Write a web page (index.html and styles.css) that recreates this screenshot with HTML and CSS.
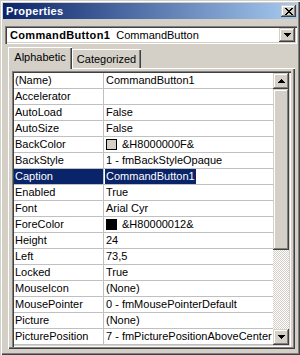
FILE: index.html
```html
<!doctype html>
<html lang="en">
<head>
  <meta charset="utf-8">
  <title>Properties</title>
  <link rel="stylesheet" href="styles.css">
</head>
<body>
<div class="win">
  <div class="titlebar">
    <span>Properties</span>
    <div class="btn close-btn">
      <svg width="8" height="7" viewBox="0 0 8 7"><path d="M0 0h2v1h-2zM6 0h2v1h-2zM1 1h2v1h-2zM5 1h2v1h-2zM2 2h4v1h-4zM3 3h2v1h-2zM2 4h4v1h-4zM1 5h2v1h-2zM5 5h2v1h-2zM0 6h2v1h-2zM6 6h2v1h-2z" fill="#000"/></svg>
    </div>
  </div>
  <div class="combo">
    <div class="combo-text"><b>CommandButton1</b> CommandButton</div>
    <div class="btn drop-btn">
      <svg width="7" height="4" viewBox="0 0 7 4"><path d="M0 0h7v1h-7zM1 1h5v1h-5zM2 2h3v1h-3zM3 3h1v1h-1z" fill="#000"/></svg>
    </div>
  </div>
  <div class="tabs">
    <div class="tab active">Alphabetic</div>
    <div class="tab cat">Categorized</div>
  </div>
  <div class="page">
    <div class="grid">
      <div class="props">
        <div class="name">(Name)</div><div class="val">CommandButton1</div>
        <div class="name">Accelerator</div><div class="val"></div>
        <div class="name">AutoLoad</div><div class="val">False</div>
        <div class="name">AutoSize</div><div class="val">False</div>
        <div class="name">BackColor</div><div class="val"><span class="swatch face"></span>&amp;H8000000F&amp;</div>
        <div class="name">BackStyle</div><div class="val">1 - fmBackStyleOpaque</div>
        <div class="name sel">Caption</div><div class="val edit"><span class="hl">CommandButton1</span></div>
        <div class="name">Enabled</div><div class="val">True</div>
        <div class="name">Font</div><div class="val">Arial Cyr</div>
        <div class="name">ForeColor</div><div class="val"><span class="swatch black"></span>&amp;H80000012&amp;</div>
        <div class="name">Height</div><div class="val">24</div>
        <div class="name">Left</div><div class="val">73,5</div>
        <div class="name">Locked</div><div class="val">True</div>
        <div class="name">MouseIcon</div><div class="val">(None)</div>
        <div class="name">MousePointer</div><div class="val">0 - fmMousePointerDefault</div>
        <div class="name">Picture</div><div class="val">(None)</div>
        <div class="name">PicturePosition</div><div class="val">7 - fmPicturePositionAboveCenter</div>
      </div>
      <div class="scroll">
        <div class="btn sb-btn">
          <svg width="7" height="4" viewBox="0 0 7 4"><path d="M3 0h1v1h-1zM2 1h3v1h-3zM1 2h5v1h-5zM0 3h7v1h-7z" fill="#000"/></svg>
        </div>
        <div class="btn thumb"></div>
        <div class="track"></div>
        <div class="btn sb-btn">
          <svg width="7" height="4" viewBox="0 0 7 4"><path d="M0 0h7v1h-7zM1 1h5v1h-5zM2 2h3v1h-3zM3 3h1v1h-1z" fill="#000"/></svg>
        </div>
      </div>
    </div>
  </div>
</div>
</body>
</html>
```

FILE: styles.css
```css
:root{--face:#d4d0c8;--hi:#fff;--shadow:#808080;--dark:#404040;--navy:#0a246a;--line:#c0c0c0;}
*{box-sizing:border-box;margin:0;padding:0;}
body{width:300px;height:355px;overflow:hidden;background:var(--face);color:#000;font:11px "Liberation Sans",Arial,sans-serif;}
.win{width:300px;height:355px;padding:3px 3px 0 3px;display:flex;flex-direction:column;background:var(--face);
  box-shadow:inset 1px 1px var(--face),inset 2px 2px var(--hi),inset -1px -1px var(--dark),inset -2px -2px var(--shadow);}
/* raised 3d button */
.btn{background:var(--face);display:flex;align-items:center;justify-content:center;
  box-shadow:inset -1px -1px var(--dark),inset 1px 1px var(--face),inset -2px -2px var(--shadow),inset 2px 2px var(--hi);}
.btn svg{display:block;}
.titlebar{height:16px;display:flex;align-items:center;justify-content:space-between;padding:0 1px 0 3px;
  background:linear-gradient(90deg,#0a246a,#a6caf0);color:#fff;font-weight:bold;font-size:11px;letter-spacing:.3px;}
.close-btn{width:15px;height:12px;}
.combo{margin:7px 0 0 2px;width:292px;height:18px;display:flex;padding:2px;background:#fff;
  box-shadow:inset 1px 1px var(--shadow),inset 2px 2px var(--dark),inset -1px -1px var(--hi),inset -2px -2px var(--face);}
.combo-text{flex:1;padding-left:3px;line-height:14px;white-space:nowrap;overflow:hidden;}
.combo-text b{letter-spacing:.35px;margin-right:3px;}
.drop-btn{width:16px;height:14px;}
.tabs{margin:3px 0 0 5px;height:21px;display:flex;align-items:flex-end;}
.tab{height:19px;padding-top:3px;line-height:15px;text-align:center;background:var(--face);
  box-shadow:inset 1px 1px var(--hi),inset -1px 0 var(--dark),inset -2px 0 var(--shadow);}
.tab.active{width:64px;height:22px;margin-bottom:-1px;position:relative;z-index:1;}
.tab.cat{width:69px;}
.page{margin-left:5px;width:287px;height:281px;padding:3px 2px 2px 4px;
  box-shadow:inset 1px 1px var(--hi),inset -1px -1px var(--dark),inset -2px -2px var(--shadow);}
.grid{width:279px;height:276px;padding:2px;display:flex;background:#fff;
  box-shadow:inset 1px 1px var(--shadow),inset 2px 2px var(--dark),inset -1px -1px var(--hi),inset -2px -2px var(--face);}
.props{flex:1;display:grid;grid-template-columns:90px 1fr;grid-auto-rows:16px;align-content:start;overflow:hidden;}
.name,.val{border-bottom:1px solid var(--line);line-height:15px;white-space:nowrap;overflow:hidden;}
.name{border-right:1px solid var(--line);padding-left:1px;}
.val{padding-left:2px;}
.name.sel{background:var(--navy);color:#fff;}
.val.edit{padding-left:1px;}
.hl{display:inline-block;height:15px;background:var(--navy);color:#fff;padding:0 1px;}
.swatch{display:inline-block;width:11px;height:11px;border:1px solid #000;margin-right:5px;vertical-align:-2px;}
.swatch.face{background:var(--face);}
.swatch.black{background:#000;}
.scroll{width:16px;display:flex;flex-direction:column;}
.sb-btn{height:16px;flex:none;}
.thumb{height:161px;flex:none;}
.track{flex:1;background:repeating-conic-gradient(var(--face) 0 25%,#fff 0 50%) 0 0/2px 2px;}
```
